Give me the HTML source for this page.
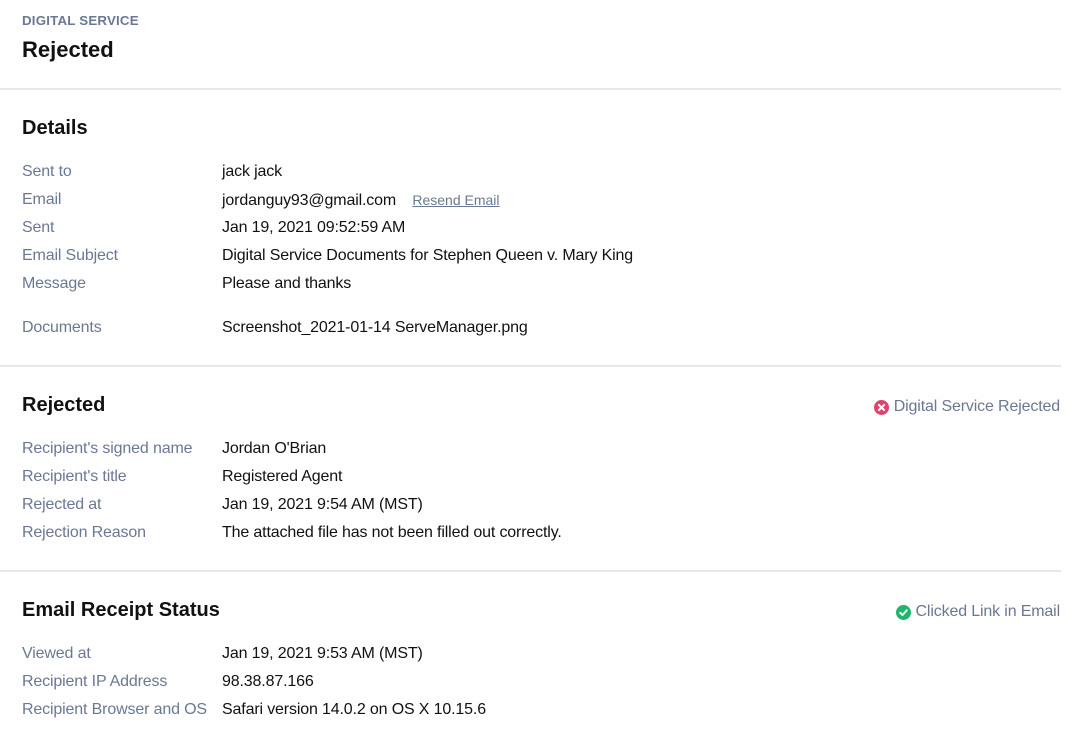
<!DOCTYPE html>
<html><head><style>
body{margin:0;width:1089px;height:746px;background:#fff;font-family:"Liberation Sans",Arial,sans-serif;position:relative;overflow:hidden}
.a{position:absolute;white-space:nowrap;line-height:20px}
.l{left:22px;color:#6b7893;font-size:16px;letter-spacing:-0.15px}
.v{left:222px;color:#111;font-size:16px;letter-spacing:-0.15px}
.h{left:22px;font-size:20px;font-weight:bold;color:#111;line-height:26px}
.hr{position:absolute;left:0;width:1061px;height:2px;background:#e6e7ec}
.st{position:absolute;right:29px;font-size:16px;letter-spacing:-0.15px;color:#6b7893;line-height:20px;display:flex;align-items:center;white-space:nowrap}
.st svg{margin-right:5px}
</style></head><body>
<div class="a" style="left:22px;top:11px;font-size:13.3px;font-weight:bold;color:#6b7893;letter-spacing:.2px">DIGITAL SERVICE</div>
<div class="a h" style="top:37px;font-size:22px">Rejected</div>
<div class="hr" style="top:88px"></div>
<div class="a h" style="top:115px">Details</div>
<div class="a l" style="top:162px">Sent to</div><div class="a v" style="top:162px">jack jack</div>
<div class="a l" style="top:190px">Email</div><div class="a v" style="top:190px">jordanguy93@gmail.com <span style="font-size:14px;letter-spacing:0;color:#6b7893;text-decoration:underline;margin-left:12px">Resend Email</span></div>
<div class="a l" style="top:218px">Sent</div><div class="a v" style="top:218px">Jan 19, 2021 09:52:59 AM</div>
<div class="a l" style="top:246px">Email Subject</div><div class="a v" style="top:246px">Digital Service Documents for Stephen Queen v. Mary King</div>
<div class="a l" style="top:274px">Message</div><div class="a v" style="top:274px">Please and thanks</div>
<div class="a l" style="top:318px">Documents</div><div class="a v" style="top:318px">Screenshot_2021-01-14 ServeManager.png</div>
<div class="hr" style="top:365px"></div>
<div class="a h" style="top:392px">Rejected</div>
<div class="st" style="top:397px"><svg width="15" height="15" viewBox="0 0 16 16"><circle cx="8" cy="8" r="8" fill="#d9466f"/><path d="M5.3 5.3L10.7 10.7M10.7 5.3L5.3 10.7" stroke="#fff" stroke-width="2.2" stroke-linecap="round"/></svg>Digital Service Rejected</div>
<div class="a l" style="top:439px">Recipient's signed name</div><div class="a v" style="top:439px">Jordan O'Brian</div>
<div class="a l" style="top:467px">Recipient's title</div><div class="a v" style="top:467px">Registered Agent</div>
<div class="a l" style="top:495px">Rejected at</div><div class="a v" style="top:495px">Jan 19, 2021 9:54 AM (MST)</div>
<div class="a l" style="top:523px">Rejection Reason</div><div class="a v" style="top:523px">The attached file has not been filled out correctly.</div>
<div class="hr" style="top:570px"></div>
<div class="a h" style="top:597px">Email Receipt Status</div>
<div class="st" style="top:602px"><svg width="15" height="15" viewBox="0 0 16 16"><circle cx="8" cy="8" r="8" fill="#22b46b"/><path d="M4.5 8.3L7 10.7L11.5 5.6" stroke="#fff" stroke-width="2" fill="none" stroke-linecap="round" stroke-linejoin="round"/></svg>Clicked Link in Email</div>
<div class="a l" style="top:644px">Viewed at</div><div class="a v" style="top:644px">Jan 19, 2021 9:53 AM (MST)</div>
<div class="a l" style="top:672px">Recipient IP Address</div><div class="a v" style="top:672px">98.38.87.166</div>
<div class="a l" style="top:700px">Recipient Browser and OS</div><div class="a v" style="top:700px">Safari version 14.0.2 on OS X 10.15.6</div>
</body></html>
